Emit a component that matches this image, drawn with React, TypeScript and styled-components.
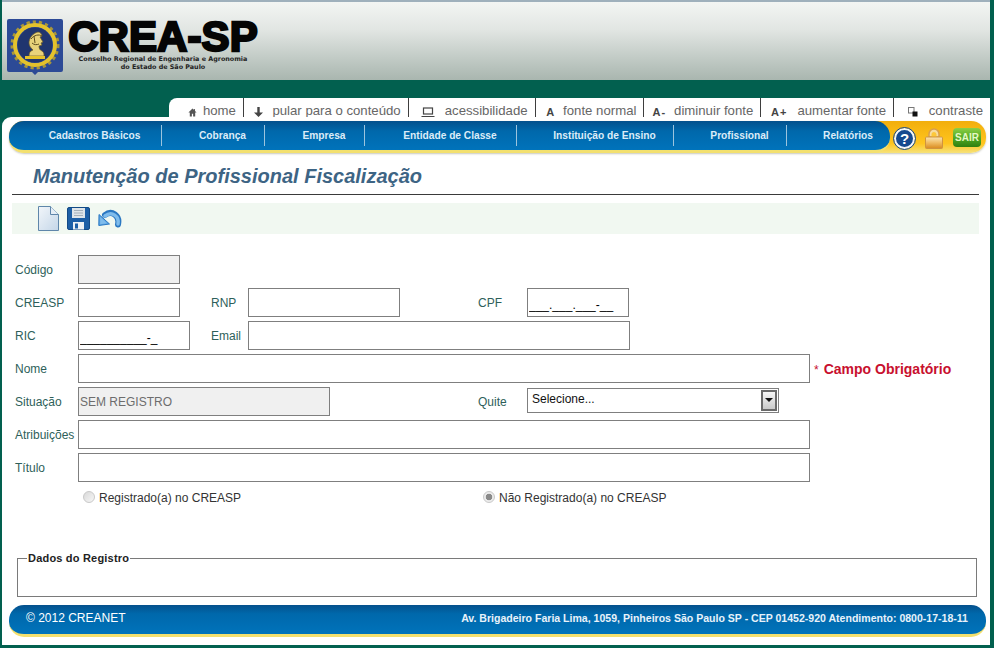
import React from "react";
import styled, { createGlobalStyle } from "styled-components";

const GlobalStyle = createGlobalStyle`
  html, body {
    margin: 0;
    padding: 0;
    background: #02604f;
  }
  * {
    box-sizing: border-box;
  }
`;

const Page = styled.div`
  width: 994px;
  height: 648px;
  overflow: hidden;
  display: flex;
  flex-direction: column;
  background: #02604f;
  font-family: "Liberation Sans", Arial, sans-serif;
`;

const Header = styled.header`
  margin: 0 4px 0 2px;
  height: 80px;
  flex: none;
  display: flex;
  align-items: flex-start;
  gap: 5px;
  padding: 16px 0 0 5px;
  border-top: 2px solid #9fb0bc;
  background: linear-gradient(180deg, #f3f5f3 0%, #e2e6e3 35%, #a9b6af 100%);
`;

const LogoText = styled.div`
  display: flex;
  flex-direction: column;
  align-items: center;
  width: 190px;
`;

const LogoTitle = styled.div`
  font-family: "Liberation Sans", Arial, sans-serif;
  font-weight: 700;
  font-size: 42px;
  line-height: 37px;
  height: 37px;
  color: #050505;
  letter-spacing: 0.1px;
  -webkit-text-stroke: 2.4px #050505;
  white-space: nowrap;
`;

const LogoSub = styled.div`
  font-family: "DejaVu Sans", sans-serif;
  font-weight: 700;
  font-size: 6.4px;
  line-height: 8px;
  color: #222;
  text-align: center;
  white-space: nowrap;
`;

const TabBar = styled.nav`
  margin: 18px 4px 0 169px;
  height: 19px;
  flex: none;
  display: flex;
  background: #fff;
  border-radius: 8px 0 0 0;
`;

const Tab = styled.a<{ $width: number; $gap: number }>`
  width: ${(p) => p.$width}px;
  height: 19px;
  display: flex;
  align-items: center;
  justify-content: flex-end;
  gap: ${(p) => p.$gap}px;
  padding-right: 7px;
  padding-top: 6px;
  font-size: 13.2px;
  color: #666;
  white-space: nowrap;
  border-right: 1px solid #3e3e3e;

  &:last-child {
    border-right: 0;
  }
`;

const TabGlyph = styled.span`
  font-size: 11px;
  font-weight: 700;
  color: #444;
  line-height: 10px;
  letter-spacing: 1px;
  margin-top: 3px;
`;

const Main = styled.main`
  margin: 0 4px 3px 2px;
  flex: 1;
  display: flex;
  flex-direction: column;
  background: #fff;
  border-radius: 9px 0 0 0;
  padding-top: 4px;
`;

const MenuBar = styled.div`
  margin-left: 7px;
  width: 977px;
  height: 32px;
  flex: none;
  display: flex;
  background: linear-gradient(180deg, #f2ae0c 0%, #ffc51e 70%, #f6e27a 100%);
  border-radius: 15px;
  box-shadow: 0 1px 2px rgba(120, 120, 90, 0.4);
`;

const Menu = styled.div`
  width: 881px;
  height: 32px;
  flex: none;
  display: flex;
  align-items: center;
  padding: 0 0 3px 0;
  background: linear-gradient(180deg, #04508c 0%, #0068ab 35%, #0073bb 100%);
  border-bottom: 3px solid #f3e06f;
  border-radius: 15px;
`;

const MenuItem = styled.a<{ $width: number }>`
  width: ${(p) => p.$width}px;
  height: 21px;
  margin-top: 3px;
  padding: 0 0 0 19px;
  display: flex;
  align-items: center;
  justify-content: center;
  font-size: 10.2px;
  font-weight: 700;
  color: #dcecf8;
  white-space: nowrap;
  border-right: 1px solid #9cc4de;

  &:last-child {
    border-right: 0;
  }
`;

const MenuTools = styled.div`
  flex: 1;
  display: flex;
  align-items: center;
  padding: 2px 5px 0 4px;
  justify-content: space-between;
`;

const HelpButton = styled.span`
  width: 21px;
  height: 21px;
  display: flex;
  align-items: center;
  justify-content: center;
  border-radius: 50%;
  background: #15498f;
  border: 2px solid #f4f6fa;
  outline: 1px solid #15498f;
  color: #fff;
  font-size: 15px;
  font-weight: 700;
`;

const ExitButton = styled.span`
  width: 28px;
  height: 19px;
  margin-top: -2px;
  display: flex;
  align-items: center;
  justify-content: center;
  border-radius: 4px;
  background: linear-gradient(180deg, #8ccf45 0%, #4ea722 55%, #2f7f10 100%);
  color: #e4f8c4;
  font-size: 10px;
  font-weight: 700;
`;

const Title = styled.h1`
  margin: 0 0 0 10px;
  width: 967px;
  height: 42px;
  flex: none;
  padding: 11px 0 0 21px;
  font-size: 20px;
  line-height: 24px;
  font-style: italic;
  font-weight: 700;
  color: #3d6484;
  border-bottom: 1px solid #3a3a3a;
`;

const Toolbar = styled.div`
  margin: 8px 0 0 10px;
  width: 967px;
  height: 31px;
  flex: none;
  display: flex;
  align-items: center;
  gap: 8px;
  padding: 0 0 1px 26px;
  background: #f1f8f1;
`;

const Form = styled.form`
  margin-top: 21px;
  padding-left: 13px;
  display: flex;
  flex-direction: column;
  gap: 4px;
`;

const Row = styled.div`
  height: 29px;
  display: flex;
  align-items: center;
`;

const Label = styled.label<{ $width?: number; $gap?: number }>`
  width: ${(p) => p.$width ?? 63}px;
  margin-left: ${(p) => p.$gap ?? 0}px;
  flex: none;
  font-size: 12px;
  color: #2e5f5a;
`;

const Input = styled.input<{ $width: number }>`
  width: ${(p) => p.$width}px;
  height: 29px;
  flex: none;
  margin: 0;
  padding: 5px 1px 0;
  border: 1px solid #7f7f7f;
  border-radius: 0;
  outline: none;
  background: ${(p) => (p.disabled ? "#f0f0f0" : "#fff")};
  font-family: "Liberation Sans", Arial, sans-serif;
  font-size: 12px;
  color: ${(p) => (p.disabled ? "#6d6d6d" : "#000")};

  &:disabled {
    padding-top: 0;
  }
`;

const Required = styled.span`
  margin-left: 4px;
  font-size: 14px;
  font-weight: 700;
  color: #c8102e;
`;

const Asterisk = styled.span`
  font-weight: 400;
  font-size: 12px;
  margin-right: 5px;
`;

const SelectBox = styled.div`
  width: 252px;
  height: 25px;
  flex: none;
  margin-top: -3px;
  display: flex;
  align-items: flex-start;
  justify-content: space-between;
  padding: 3px 1px 1px 4px;
  border: 1px solid #7f7f7f;
  font-size: 12px;
  color: #111;
`;

const SelectArrow = styled.span`
  width: 16px;
  height: 21px;
  margin-top: -2px;
  display: flex;
  align-items: center;
  justify-content: center;
  border: 2px solid #6a6a6a;
  background: linear-gradient(180deg, #f6f6f6, #c9c9c9);

  &::after {
    content: "";
    border-left: 4px solid transparent;
    border-right: 4px solid transparent;
    border-top: 4px solid #111;
  }
`;

const RadioRow = styled.div`
  margin: 7px 0 0 81px;
  height: 18px;
  display: flex;
  align-items: center;
`;

const RadioLabel = styled.label<{ $width: number }>`
  width: ${(p) => p.$width}px;
  display: flex;
  align-items: center;
  gap: 4px;
  font-size: 12px;
  color: #333;
`;

const RadioDot = styled.span<{ $checked?: boolean }>`
  width: 12px;
  height: 12px;
  margin-top: -2px;
  border-radius: 50%;
  border: 1px solid #c9c9c9;
  background: ${(p) =>
    p.$checked
      ? "radial-gradient(circle, #8a8a8a 0 3px, #ececec 3.6px)"
      : "linear-gradient(135deg, #d9d9d9, #f6f6f6)"};
`;

const Fieldset = styled.fieldset`
  margin: 45px 0 0 15px;
  width: 960px;
  height: 45px;
  flex: none;
  padding: 0;
  border: 1px solid #7a7a7a;
`;

const Legend = styled.legend`
  margin-left: 9px;
  padding: 0 1px;
  font-size: 11px;
  font-weight: 700;
  color: #222;
  letter-spacing: 0.2px;
`;

const Footer = styled.footer`
  margin: 8px 0 0 7px;
  width: 977px;
  height: 32px;
  flex: none;
  display: flex;
  align-items: center;
  justify-content: space-between;
  padding: 0 18px 3px 17px;
  background: linear-gradient(180deg, #04508c 0%, #0068ab 30%, #0073bb 100%);
  border-bottom: 3px solid #f3e06f;
  border-radius: 15px;
  color: #fff;
`;

const Copy = styled.span`
  font-size: 12px;
`;

const Address = styled.span`
  font-size: 10.55px;
  font-weight: 700;
  color: #e8f2fa;
`;

const Seal = () => (
  <svg width="56" height="58" viewBox="0 0 56 58">
    <path d="M2 1h52a2 2 0 0 1 2 2v49a2 2 0 0 1-2 2H31l-3 3-3-3H2a2 2 0 0 1-2-2V3a2 2 0 0 1 2-2z" fill="#2c4a96" />
    <circle cx="28" cy="27" r="23" fill="none" stroke="#a8963a" strokeWidth="3" strokeDasharray="3.2 3" />
    <circle cx="28" cy="27" r="20" fill="none" stroke="#e4c22c" strokeWidth="4" />
    <circle cx="28" cy="27" r="17.500" fill="#20356f" />
    <path d="M22 38c0-3 1-5 4-6-2-2-4-4-4-7 0-5 4-10 9-11 2 0 4 2 4 4l-2 1 3 5-2 1 1 2-3 1c0 3 1 4 3 5 2 1 2 3 2 5z" fill="#e8d27a" stroke="#6d5a22" strokeWidth="0.7" />
    <path d="M24 21c3-4 8-5 11-3M25 25c2 2 5 2 7 1M27 18l1 7" fill="none" stroke="#5d4c1e" strokeWidth="1" />
    <rect x="18" y="38" width="20" height="3" fill="#e4c22c" />
  </svg>
);

const HomeIcon = () => (
  <svg width="9" height="9" viewBox="0 0 10 10" style={{ marginTop: 3 }}>
    <path d="M5 0.5 0.5 5h1.5v4.5h2.3V6.5h1.4v3H8V5h1.5L7.8 3.3V1H6.8v1.3z" fill="#555" />
  </svg>
);

const DownIcon = () => (
  <svg width="9" height="10" viewBox="0 0 9 10" style={{ marginTop: 3 }}>
    <path d="M3.300 0h2.400v5.500H9L4.500 10 0 5.500h3.300z" fill="#444" />
  </svg>
);

const LaptopIcon = () => (
  <svg width="14" height="11" viewBox="0 0 14 11" style={{ marginTop: 3 }}>
    <rect x="2.500" y="1" width="9" height="6" fill="none" stroke="#444" strokeWidth="1.200" />
    <rect x="0.500" y="9" width="13" height="1.600" fill="#444" />
  </svg>
);

const ContrastIcon = () => (
  <svg width="10" height="10" viewBox="0 0 10 10" style={{ marginTop: 3 }}>
    <rect x="0.500" y="0.500" width="5.500" height="5.500" fill="#fff" stroke="#777" />
    <rect x="4.500" y="4.500" width="5" height="5" fill="#111" />
  </svg>
);

const LockIcon = () => (
  <svg width="18" height="21" viewBox="0 0 18 21">
    <defs>
      <linearGradient id="lockBody" x1="0" y1="0" x2="0" y2="1">
        <stop offset="0" stopColor="#fbe6b4" />
        <stop offset="0.5" stopColor="#efbb62" />
        <stop offset="1" stopColor="#d98a1e" />
      </linearGradient>
    </defs>
    <path d="M4 9V6a5 5 0 0 1 10 0v3z" fill="#f6dca0" stroke="#d99e4c" strokeWidth="1.500" />
    <path d="M6.500 9V6.500a2.500 2.500 0 0 1 5 0V9z" fill="#fdc83a" />
    <rect x="0.500" y="9" width="17" height="11.500" rx="1" fill="url(#lockBody)" stroke="#cf9440" />
  </svg>
);

const DocIcon = () => (
  <svg width="21" height="25" viewBox="0 0 21 25">
    <defs>
      <linearGradient id="docFill" x1="0" y1="0" x2="1" y2="1">
        <stop offset="0" stopColor="#f2f6fa" />
        <stop offset="1" stopColor="#c4d6e8" />
      </linearGradient>
    </defs>
    <path d="M0.500 0.500h12l8 8v16h-20z" fill="url(#docFill)" stroke="#5f86aa" />
    <path d="M12.500 0.500v8h8" fill="#e6eef6" stroke="#5f86aa" />
  </svg>
);

const SaveIcon = () => (
  <svg width="23" height="23" viewBox="0 0 23 23">
    <path d="M2 0.500h19a1.500 1.500 0 0 1 1.500 1.500v19a1.500 1.500 0 0 1-1.500 1.500H2A1.500 1.500 0 0 1 0.500 21V2A1.500 1.500 0 0 1 2 0.500z" fill="#1d5fa6" stroke="#134a86" />
    <rect x="5" y="1" width="13" height="10" fill="#dfe5ea" />
    <path d="M7 3.500h9M7 6h9M7 8.500h9" stroke="#a4b0bb" strokeWidth="1" />
    <rect x="6" y="15" width="11" height="7.500" fill="#eef2f5" />
    <rect x="8" y="16.500" width="3" height="5" fill="#1d5fa6" />
  </svg>
);

const UndoIcon = () => (
  <svg width="24" height="20" viewBox="0 0 24 20">
    <path d="M20 16.500C22 8 14 1.500 7 7" fill="none" stroke="#2b78c2" strokeWidth="6" strokeLinecap="round" />
    <path d="M1 6.500 0.800 17.500 11.500 16z" fill="#5ba5e4" stroke="#2b78c2" strokeLinejoin="round" />
    <path d="M20 16C21.500 8.500 14 2.500 7 8" fill="none" stroke="#7fbcec" strokeWidth="3.500" strokeLinecap="round" />
    <path d="M2.200 9 2.200 16.300 9 15.300z" fill="#7fbcec" />
  </svg>
);

const menuItems: [string, number][] = [
  ["Cadastros Básicos", 153],
  ["Cobrança", 103],
  ["Empresa", 100],
  ["Entidade de Classe", 152],
  ["Instituição de Ensino", 157],
  ["Profissional", 113],
  ["Relatórios", 103],
];

function App() {
  return (
    <Page>
      <GlobalStyle />
      <Header>
        <Seal />
        <LogoText>
          <LogoTitle>CREA-SP</LogoTitle>
          <LogoSub>
            Conselho Regional de Engenharia e Agronomia
            <br />
            do Estado de São Paulo
          </LogoSub>
        </LogoText>
      </Header>
      <TabBar>
        <Tab $width={75} $gap={6}>
          <HomeIcon />
          home
        </Tab>
        <Tab $width={165} $gap={9}>
          <DownIcon />
          pular para o conteúdo
        </Tab>
        <Tab $width={127} $gap={10}>
          <LaptopIcon />
          acessibilidade
        </Tab>
        <Tab $width={109} $gap={8}>
          <TabGlyph>A</TabGlyph>
          fonte normal
        </Tab>
        <Tab $width={117} $gap={8}>
          <TabGlyph>A-</TabGlyph>
          diminuir fonte
        </Tab>
        <Tab $width={133} $gap={10}>
          <TabGlyph>A+</TabGlyph>
          aumentar fonte
        </Tab>
        <Tab $width={96} $gap={11}>
          <ContrastIcon />
          contraste
        </Tab>
      </TabBar>
      <Main>
        <MenuBar>
          <Menu>
            {menuItems.map(([label, width]) => (
              <MenuItem key={label} $width={width}>
                {label}
              </MenuItem>
            ))}
          </Menu>
          <MenuTools>
            <HelpButton>?</HelpButton>
            <LockIcon />
            <ExitButton>SAIR</ExitButton>
          </MenuTools>
        </MenuBar>
        <Title>Manutenção de Profissional Fiscalização</Title>
        <Toolbar>
          <DocIcon />
          <SaveIcon />
          <UndoIcon />
        </Toolbar>
        <Form>
          <Row>
            <Label>Código</Label>
            <Input $width={102} disabled />
          </Row>
          <Row>
            <Label>CREASP</Label>
            <Input $width={102} />
            <Label $gap={31} $width={37}>RNP</Label>
            <Input $width={152} />
            <Label $gap={78} $width={49}>CPF</Label>
            <Input $width={102} readOnly value="___.___.___-__" />
          </Row>
          <Row>
            <Label>RIC</Label>
            <Input $width={112} readOnly value="__________-_" />
            <Label $gap={21} $width={37}>Email</Label>
            <Input $width={382} />
          </Row>
          <Row>
            <Label>Nome</Label>
            <Input $width={732} />
            <Required>
              <Asterisk>*</Asterisk>Campo Obrigatório
            </Required>
          </Row>
          <Row>
            <Label>Situação</Label>
            <Input $width={252} disabled value="SEM REGISTRO" />
            <Label $gap={148} $width={49}>Quite</Label>
            <SelectBox>
              Selecione...
              <SelectArrow />
            </SelectBox>
          </Row>
          <Row>
            <Label>Atribuições</Label>
            <Input $width={732} />
          </Row>
          <Row>
            <Label>Título</Label>
            <Input $width={732} />
          </Row>
        </Form>
        <RadioRow>
          <RadioLabel $width={400}>
            <RadioDot />
            Registrado(a) no CREASP
          </RadioLabel>
          <RadioLabel $width={300}>
            <RadioDot $checked />
            Não Registrado(a) no CREASP
          </RadioLabel>
        </RadioRow>
        <Fieldset>
          <Legend>Dados do Registro</Legend>
        </Fieldset>
        <Footer>
          <Copy>© 2012 CREANET</Copy>
          <Address>Av. Brigadeiro Faria Lima, 1059, Pinheiros São Paulo SP - CEP 01452-920 Atendimento: 0800-17-18-11</Address>
        </Footer>
      </Main>
    </Page>
  );
}

export default App;
